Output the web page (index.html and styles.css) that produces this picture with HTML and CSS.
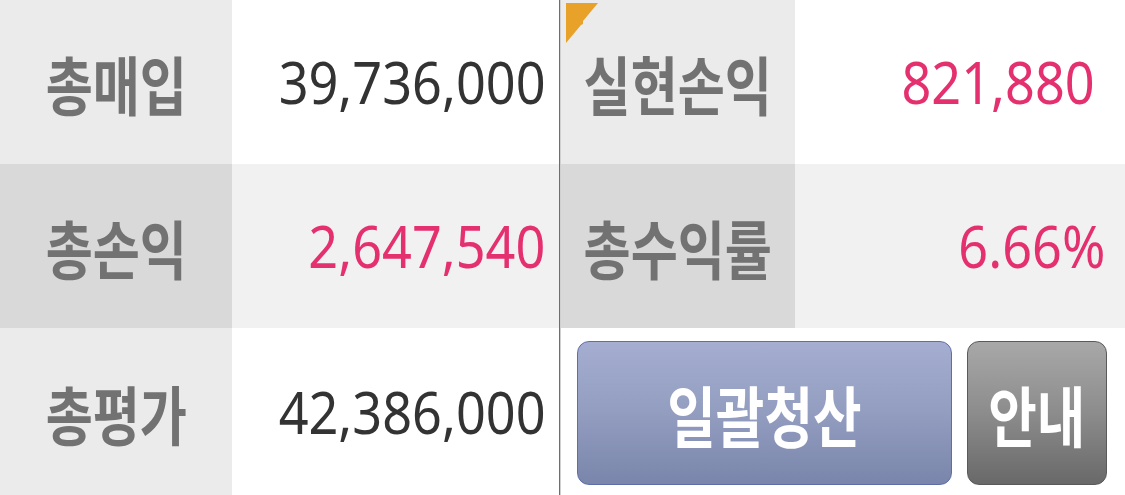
FILE: index.html
```html
<!DOCTYPE html>
<html lang="ko">
<head>
<meta charset="utf-8">
<title>잔고 요약</title>
<link rel="stylesheet" href="styles.css">
</head>
<body>
<div class="board">
  <div class="cell label row-a"><span class="ktext">총매입</span></div>
  <div class="cell value row-a"><span class="num">39,736,000</span></div>
  <div class="divider"></div>
  <div class="cell label row-a flagged">
    <svg class="flag" width="34" height="42" viewBox="0 0 34 42" aria-hidden="true">
      <polygon points="0,0 32,0 17,18 17,21 15,22 0,40" fill="#e8a22a"/>
    </svg>
    <span class="ktext">실현손익</span>
  </div>
  <div class="cell value row-a value-right value-wide"><span class="num plus">821,880</span></div>

  <div class="cell label row-b"><span class="ktext">총손익</span></div>
  <div class="cell value row-b"><span class="num plus">2,647,540</span></div>
  <div class="cell label row-b"><span class="ktext">총수익률</span></div>
  <div class="cell value row-b value-right"><span class="num plus">6.66%</span></div>

  <div class="cell label row-a"><span class="ktext">총평가</span></div>
  <div class="cell value row-a"><span class="num">42,386,000</span></div>
  <div class="actions">
    <button class="btn btn-blue" type="button"><span class="ktext">일괄청산</span></button>
    <button class="btn btn-gray" type="button"><span class="ktext">안내</span></button>
  </div>
</div>
</body>
</html>
```
FILE: styles.css
```css
html, body {
  margin: 0;
  padding: 0;
  background: #ffffff;
}

body {
  width: 1125px;
  height: 495px;
  overflow: hidden;
  font-family: "Noto Sans", Roboto, "Noto Sans CJK KR", sans-serif;
}

.board {
  display: grid;
  grid-template-columns: 232px 327px 2px 234px 330px;
  grid-template-rows: 164px 164px 167px;
}

.cell {
  display: flex;
  align-items: center;
  overflow: hidden;
}

.label {
  justify-content: center;
  background: #ebebeb;
}

.value {
  justify-content: flex-end;
  padding-right: 14px;
  background: #ffffff;
}

.label.row-b {
  background: #d9d9d9;
}

.value.row-b {
  background: #f1f1f1;
}

.value-right {
  padding-right: 20px;
}

.value-wide {
  padding-right: 30px;
}

.divider {
  grid-column: 3;
  grid-row: 1 / span 3;
  background: #6e6e6e;
  border-right: 1px solid #d0d0d0;
  box-sizing: border-box;
  width: 2px;
}

.flagged {
  position: relative;
}

.flag {
  position: absolute;
  left: 5px;
  top: 3px;
}

.ktext {
  font-family: "Noto Sans CJK KR", "Noto Sans", sans-serif;
  font-weight: 700;
  font-size: 64px;
  line-height: 1;
  color: #727272;
  display: inline-block;
  transform: scaleX(0.8);
  transform-origin: center center;
  white-space: nowrap;
}

.num {
  font-family: "Noto Sans", Roboto, sans-serif;
  font-weight: 400;
  font-size: 58px;
  line-height: 1;
  color: #333333;
  display: inline-block;
  transform: scaleX(0.9);
  transform-origin: right center;
  white-space: nowrap;
}

.num.plus {
  color: #e5306f;
}

.actions {
  grid-column: 4 / span 2;
  display: flex;
  align-items: stretch;
  gap: 15px;
  padding: 13px 18px 10px 16px;
  background: #ffffff;
}

.btn {
  margin: 0;
  padding: 0;
  display: flex;
  align-items: center;
  justify-content: center;
  border-radius: 12px;
  cursor: pointer;
}

.btn .ktext {
  color: #ffffff;
  font-size: 66px;
}

.btn-blue {
  width: 375px;
  border: 1px solid #5f6ea8;
  background: linear-gradient(to bottom, #a5aed0 0%, #929dc0 50%, #7a85ab 100%);
}

.btn-gray {
  width: 140px;
  border: 1px solid #5a5a5a;
  background: linear-gradient(to bottom, #a8a8a8 0%, #8c8c8c 50%, #696969 100%);
}
```
